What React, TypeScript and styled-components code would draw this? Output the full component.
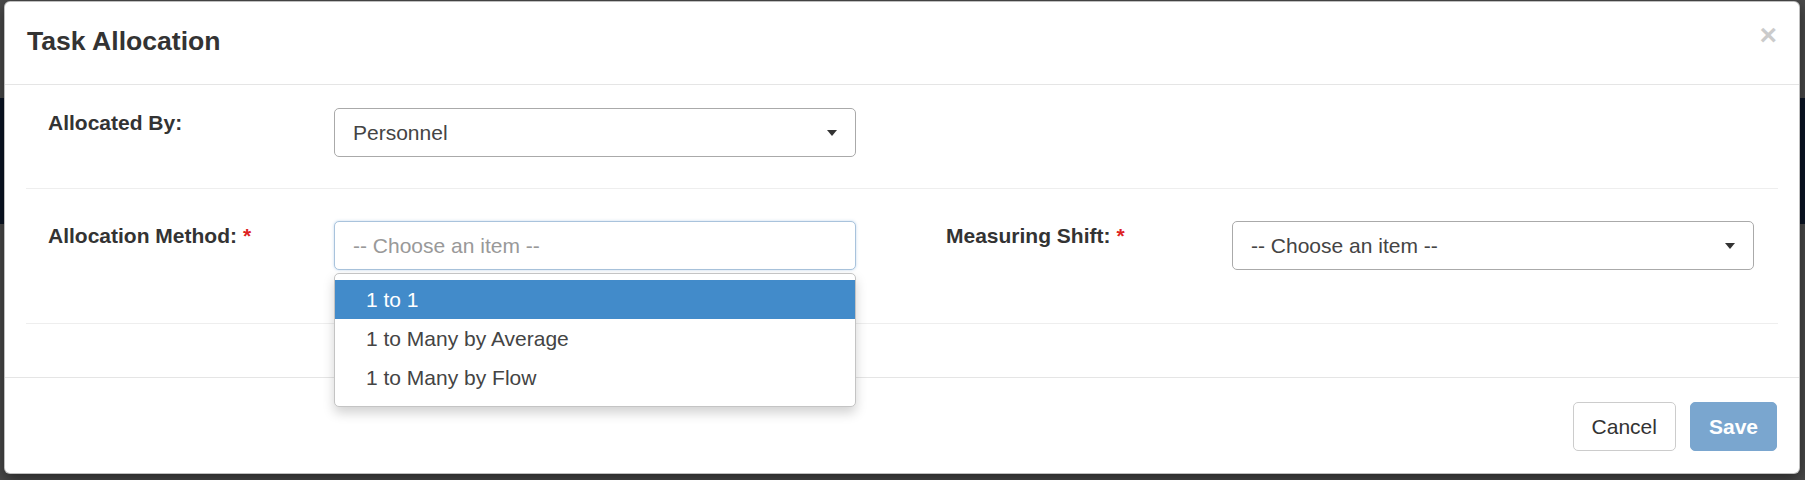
import React from "react";
import styled, { createGlobalStyle } from "styled-components";

const GlobalStyle = createGlobalStyle`
  html, body {
    margin: 0;
    padding: 0;
    background: #4b4b4b;
  }
  * { box-sizing: border-box; }
  body {
    font-family: "Liberation Sans", Arial, Helvetica, sans-serif;
    color: #333;
  }
`;

const Page = styled.div`
  position: relative;
  width: 1805px;
  height: 480px;
  overflow: hidden;
  background: #4b4b4b;
`;

const BackdropBand = styled.div`
  position: absolute;
  left: 0;
  right: 0;
  top: 98px;
  height: 126px;
  background: #0b1526;
`;

const Modal = styled.div`
  position: absolute;
  left: 4px;
  top: 1px;
  width: 1796px;
  background: #fff;
  border: 1px solid rgba(0, 0, 0, 0.25);
  border-radius: 6px;
  box-shadow: 0 5px 15px rgba(0, 0, 0, 0.5);
`;

const Header = styled.div`
  display: flex;
  justify-content: space-between;
  align-items: flex-start;
  padding: 21px 22px 24px 22px;
  border-bottom: 1px solid #e5e5e5;
`;

const Title = styled.h4`
  margin: 0;
  font-size: 26.6px;
  line-height: 37px;
  font-weight: 700;
  color: #333;
`;

const Close = styled.span`
  margin-top: -3px;
  font-size: 30px;
  line-height: 30px;
  font-weight: 700;
  color: #000;
  opacity: 0.2;
`;

const Body = styled.div`
  padding: 23px 21px 53px 21px;
`;

const Row = styled.div<{ $mt?: number; $mb?: number }>`
  display: grid;
  grid-template-columns: 1fr 1fr;
  column-gap: 44px;
  margin-top: ${(p) => p.$mt ?? 0}px;
  margin-bottom: ${(p) => p.$mb ?? 0}px;
`;

const Divider = styled.div`
  height: 1px;
  background: #eee;
`;

const Field = styled.div`
  display: grid;
  grid-template-columns: 264px 1fr;
  column-gap: 22px;
  padding: 0 24px 0 22px;
`;

const Label = styled.label`
  font-size: 21px;
  line-height: 29px;
  font-weight: 700;
  color: #333;
`;

const Required = styled.span`
  color: #d22;
  margin-left: 6px;
`;

const SelectWrap = styled.div`
  position: relative;
`;

const SelectBox = styled.div<{ $focused?: boolean }>`
  height: 49px;
  display: flex;
  align-items: center;
  justify-content: space-between;
  padding: 0 18px 0 18px;
  border: 1px solid ${(p) => (p.$focused ? "#a9c3dc" : "#aaa")};
  border-radius: 5px;
  background: #fff;
  box-shadow: ${(p) => (p.$focused ? "0 0 3px rgba(82, 144, 204, 0.35)" : "none")};
`;

const SelectText = styled.span<{ $placeholder?: boolean }>`
  font-size: 21px;
  line-height: 29px;
  color: ${(p) => (p.$placeholder ? "#999" : "#444")};
`;

const Caret = styled.span`
  width: 0;
  height: 0;
  border-style: solid;
  border-width: 6px 5px 0 5px;
  border-color: #333 transparent transparent transparent;
`;

const Dropdown = styled.ul`
  position: absolute;
  z-index: 5;
  left: 0;
  right: 0;
  top: 52px;
  margin: 0;
  list-style: none;
  padding: 6px 0 9px 0;
  background: #fff;
  border: 1px solid #c4c4c4;
  border-radius: 5px;
  box-shadow: 0 6px 12px rgba(0, 0, 0, 0.18);
`;

const Option = styled.li<{ $active?: boolean }>`
  height: 39px;
  display: flex;
  align-items: center;
  padding: 0 31px;
  font-size: 21px;
  color: ${(p) => (p.$active ? "#fff" : "#444")};
  background: ${(p) => (p.$active ? "#428bca" : "transparent")};
`;

const Footer = styled.div`
  display: flex;
  justify-content: flex-end;
  gap: 14px;
  padding: 24px 22px 22px 22px;
  border-top: 1px solid #e5e5e5;
`;

const Button = styled.button<{ $primary?: boolean }>`
  height: 49px;
  padding: 0 18px;
  font-family: "Liberation Sans", Arial, Helvetica, sans-serif;
  font-size: 21px;
  font-weight: ${(p) => (p.$primary ? 700 : 400)};
  border-radius: 5px;
  border: 1px solid ${(p) => (p.$primary ? "#7aa6cf" : "#ccc")};
  background: ${(p) => (p.$primary ? "#7aa6cf" : "#fff")};
  color: ${(p) => (p.$primary ? "#fff" : "#333")};
`;

const options = ["1 to 1", "1 to Many by Average", "1 to Many by Flow"];

export default function App() {
  return (
    <Page>
      <GlobalStyle />
      <BackdropBand />
      <Modal>
        <Header>
          <Title>Task Allocation</Title>
          <Close>×</Close>
        </Header>
        <Body>
          <Row $mb={31}>
            <Field>
              <Label>Allocated By:</Label>
              <SelectWrap>
                <SelectBox>
                  <SelectText>Personnel</SelectText>
                  <Caret />
                </SelectBox>
              </SelectWrap>
            </Field>
            <div />
          </Row>
          <Divider />
          <Row $mt={32} $mb={53}>
            <Field>
              <Label>
                Allocation Method:<Required>*</Required>
              </Label>
              <SelectWrap>
                <SelectBox $focused>
                  <SelectText $placeholder>-- Choose an item --</SelectText>
                </SelectBox>
                <Dropdown>
                  {options.map((o, i) => (
                    <Option key={o} $active={i === 0}>
                      {o}
                    </Option>
                  ))}
                </Dropdown>
              </SelectWrap>
            </Field>
            <Field>
              <Label>
                Measuring Shift:<Required>*</Required>
              </Label>
              <SelectWrap>
                <SelectBox>
                  <SelectText>-- Choose an item --</SelectText>
                  <Caret />
                </SelectBox>
              </SelectWrap>
            </Field>
          </Row>
          <Divider />
        </Body>
        <Footer>
          <Button>Cancel</Button>
          <Button $primary>Save</Button>
        </Footer>
      </Modal>
    </Page>
  );
}
